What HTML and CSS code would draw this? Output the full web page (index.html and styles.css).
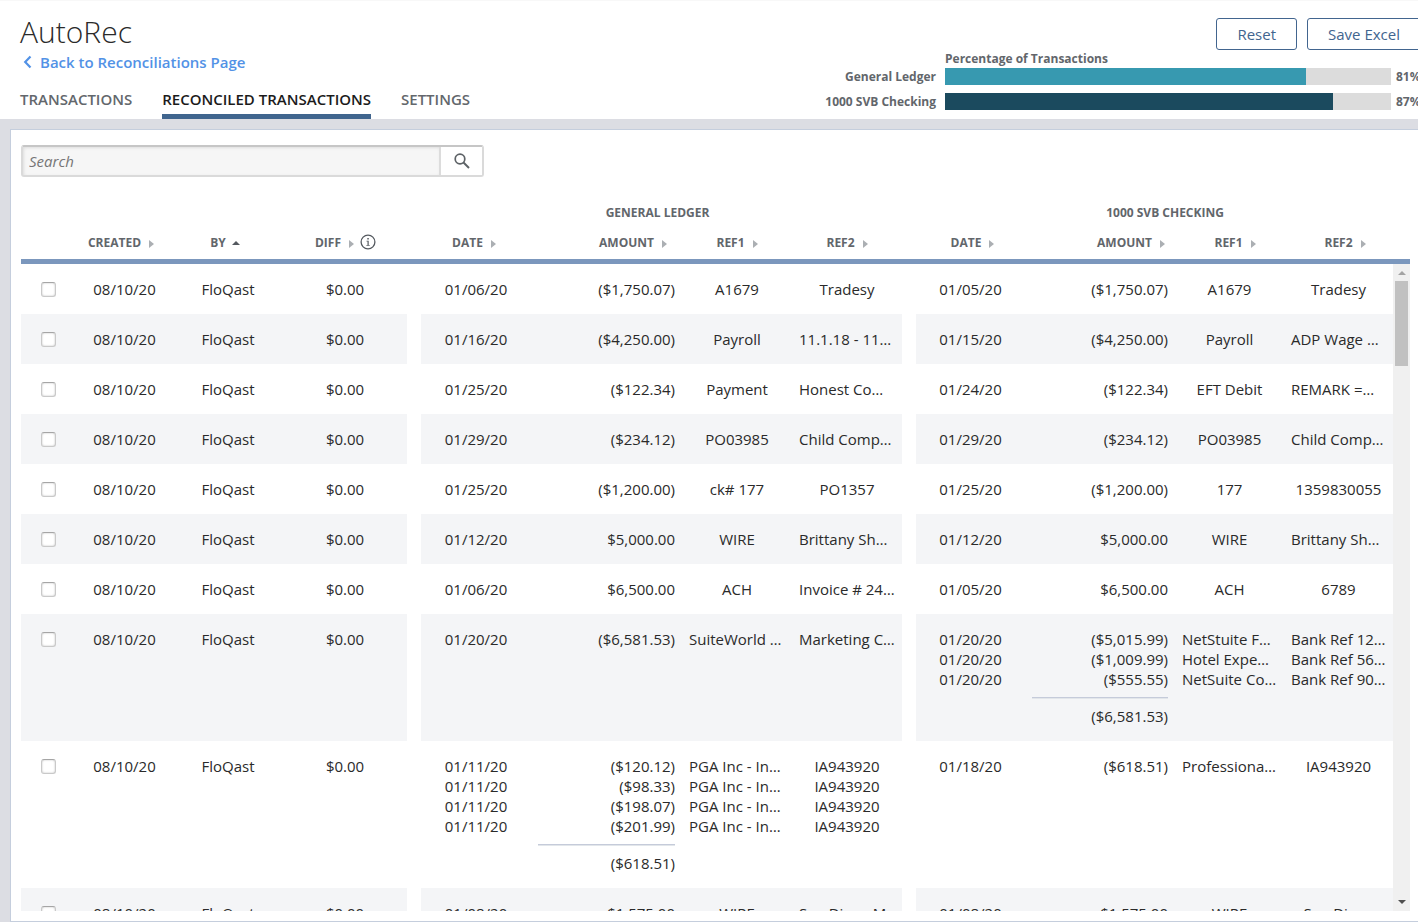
FILE: index.html
```html
<!DOCTYPE html>
<html lang="en">
<head>
<meta charset="utf-8">
<title>AutoRec</title>
<link rel="stylesheet" href="styles.css">
</head>
<body>
<div class="page">
  <header class="header">
    <div class="heading">
      <h1 class="title">AutoRec</h1>
      <a class="back" href="#"><svg class="back-icon" width="10" height="14" viewBox="0 0 10 14" fill="none" stroke="currentColor" stroke-width="2.2"><path d="M7.5 1.5L2.2 7L7.5 12.5"/></svg>Back to Reconciliations Page</a>
      <nav class="tabs">
        <a class="tab" href="#">TRANSACTIONS</a>
        <a class="tab active" href="#">RECONCILED TRANSACTIONS</a>
        <a class="tab" href="#">SETTINGS</a>
      </nav>
    </div>
    <div class="summary">
      <div class="actions">
        <button class="button" type="button">Reset</button>
        <button class="button" type="button">Save Excel</button>
      </div>
      <div class="chart">
        <span class="chart-title">Percentage of Transactions</span>
        <span class="chart-label">General Ledger</span>
        <div class="bar"><div class="fill ledger" style="width:81%"></div></div>
        <span class="percent">81%</span>
        <span class="chart-label">1000 SVB Checking</span>
        <div class="bar"><div class="fill checking" style="width:87%"></div></div>
        <span class="percent">87%</span>
      </div>
    </div>
  </header>
  <main class="main">
    <section class="card">
      <form class="search">
        <input class="search-input" type="text" placeholder="Search" aria-label="Search">
        <button class="search-button" type="button" aria-label="Search"><svg width="16" height="16" viewBox="0 0 16 16" fill="none" stroke="#5d6266" stroke-width="2"><circle cx="6" cy="6" r="4.8" stroke-width="1.7"/><path d="M9.5 9.5L15 15"/></svg></button>
      </form>
      <table class="table head">
        <colgroup><col class="h-check"><col class="h-created"><col class="h-by"><col class="h-diff"><col class="h-date"><col class="h-amount"><col class="h-ref"><col class="h-ref"><col class="h-date2"><col class="h-amount2"><col class="h-ref"><col class="h-ref"><col class="h-end"></colgroup>
        <thead>
          <tr class="groups"><th colspan="4"></th><th class="ledger-title" colspan="4">GENERAL LEDGER</th><th class="checking-title" colspan="5">1000 SVB CHECKING</th></tr>
          <tr class="labels">
            <th></th>
            <th>CREATED<i class="sort"></i></th>
            <th>BY<i class="sort up"></i></th>
            <th>DIFF<i class="sort"></i><svg class="info" width="16" height="16" viewBox="0 0 16 16"><circle cx="8" cy="8" r="6.9" fill="none" stroke="#54595f" stroke-width="1.3"/><path d="M7.3 4h1.5v1.5H7.3zM6.5 6.7h2.2v4.2h1v.9H6.4v-.9h1.1V7.6h-1z" fill="#54595f"/></svg></th>
            <th class="start">DATE<i class="sort"></i></th>
            <th class="amount">AMOUNT<i class="sort"></i></th>
            <th>REF1<i class="sort"></i></th>
            <th>REF2<i class="sort"></i></th>
            <th class="start">DATE<i class="sort"></i></th>
            <th class="amount">AMOUNT<i class="sort"></i></th>
            <th>REF1<i class="sort"></i></th>
            <th>REF2<i class="sort"></i></th>
            <th></th>
          </tr>
        </thead>
      </table>
      <div class="scroll">
        <div class="viewport">
          <table class="table body">
            <colgroup><col class="b-check"><col class="b-created"><col class="b-by"><col class="b-diff"><col class="b-date"><col class="b-amount"><col class="b-ref"><col class="b-ref"><col class="b-date2"><col class="b-amount2"><col class="b-ref2"><col class="b-ref2"></colgroup>
            <tbody>
              <tr><td><input class="check" type="checkbox" aria-label="Select row 1"></td><td>08/10/20</td><td>FloQast</td><td>$0.00</td><td class="start">01/06/20</td><td class="amount">($1,750.07)</td><td>A1679</td><td>Tradesy</td><td class="start">01/05/20</td><td class="amount">($1,750.07)</td><td>A1679</td><td>Tradesy</td></tr>
              <tr><td><input class="check" type="checkbox" aria-label="Select row 2"></td><td>08/10/20</td><td>FloQast</td><td>$0.00</td><td class="start">01/16/20</td><td class="amount">($4,250.00)</td><td>Payroll</td><td class="cut">11.1.18 - 11…</td><td class="start">01/15/20</td><td class="amount">($4,250.00)</td><td>Payroll</td><td class="cut">ADP Wage …</td></tr>
              <tr><td><input class="check" type="checkbox" aria-label="Select row 3"></td><td>08/10/20</td><td>FloQast</td><td>$0.00</td><td class="start">01/25/20</td><td class="amount">($122.34)</td><td>Payment</td><td class="cut">Honest Co…</td><td class="start">01/24/20</td><td class="amount">($122.34)</td><td>EFT Debit</td><td class="cut">REMARK =…</td></tr>
              <tr><td><input class="check" type="checkbox" aria-label="Select row 4"></td><td>08/10/20</td><td>FloQast</td><td>$0.00</td><td class="start">01/29/20</td><td class="amount">($234.12)</td><td>PO03985</td><td class="cut">Child Comp…</td><td class="start">01/29/20</td><td class="amount">($234.12)</td><td>PO03985</td><td class="cut">Child Comp…</td></tr>
              <tr><td><input class="check" type="checkbox" aria-label="Select row 5"></td><td>08/10/20</td><td>FloQast</td><td>$0.00</td><td class="start">01/25/20</td><td class="amount">($1,200.00)</td><td>ck# 177</td><td>PO1357</td><td class="start">01/25/20</td><td class="amount">($1,200.00)</td><td>177</td><td>1359830055</td></tr>
              <tr><td><input class="check" type="checkbox" aria-label="Select row 6"></td><td>08/10/20</td><td>FloQast</td><td>$0.00</td><td class="start">01/12/20</td><td class="amount">$5,000.00</td><td>WIRE</td><td class="cut">Brittany Sh…</td><td class="start">01/12/20</td><td class="amount">$5,000.00</td><td>WIRE</td><td class="cut">Brittany Sh…</td></tr>
              <tr><td><input class="check" type="checkbox" aria-label="Select row 7"></td><td>08/10/20</td><td>FloQast</td><td>$0.00</td><td class="start">01/06/20</td><td class="amount">$6,500.00</td><td>ACH</td><td class="cut">Invoice # 24…</td><td class="start">01/05/20</td><td class="amount">$6,500.00</td><td>ACH</td><td>6789</td></tr>
              <tr><td><input class="check" type="checkbox" aria-label="Select row 8"></td><td>08/10/20</td><td>FloQast</td><td>$0.00</td><td class="start">01/20/20</td><td class="amount">($6,581.53)</td><td class="cut">SuiteWorld …</td><td class="cut">Marketing C…</td><td class="start">01/20/20<br>01/20/20<br>01/20/20</td><td class="amount">($5,015.99)<br>($1,009.99)<br>($555.55)<hr class="rule">($6,581.53)</td><td class="cut">NetStuite F…<br>Hotel Expe…<br>NetSuite Co…</td><td class="cut">Bank Ref 12…<br>Bank Ref 56…<br>Bank Ref 90…</td></tr>
              <tr><td><input class="check" type="checkbox" aria-label="Select row 9"></td><td>08/10/20</td><td>FloQast</td><td>$0.00</td><td class="start">01/11/20<br>01/11/20<br>01/11/20<br>01/11/20</td><td class="amount">($120.12)<br>($98.33)<br>($198.07)<br>($201.99)<hr class="rule">($618.51)</td><td class="cut">PGA Inc - In…<br>PGA Inc - In…<br>PGA Inc - In…<br>PGA Inc - In…</td><td>IA943920<br>IA943920<br>IA943920<br>IA943920</td><td class="start">01/18/20</td><td class="amount">($618.51)</td><td class="cut">Professiona…</td><td>IA943920</td></tr>
              <tr><td><input class="check" type="checkbox" aria-label="Select row 10"></td><td>08/10/20</td><td>FloQast</td><td>$0.00</td><td class="start">01/08/20</td><td class="amount">$1,575.00</td><td>WIRE</td><td class="cut">San Diego M…</td><td class="start">01/08/20</td><td class="amount">$1,575.00</td><td>WIRE</td><td>San Diego</td></tr>
            </tbody>
          </table>
        </div>
        <div class="scrollbar"><i class="arrow arrow-up"></i><div class="track"><div class="thumb"></div></div><i class="arrow arrow-down"></i></div>
      </div>
    </section>
  </main>
</div>
</body>
</html>
```
FILE: styles.css
```css
* { box-sizing: border-box; }
html { overflow: hidden; }
body {
  margin: 0;
  overflow: hidden;
  background: #dcdde3;
  color: #2a2a2a;
  font-family: "Open Sans", "Noto Sans", sans-serif;
  font-size: 15px;
  line-height: 20px;
}
/* the content runs slightly past the right edge of the window */
.page {
  display: flex;
  flex-direction: column;
  height: 100vh;
  margin-right: -13px;
}
.header {
  display: flex;
  justify-content: space-between;
  padding: 0 10px 0 20px;
  background: #fff;
  border-top: 1px solid #f8f8f8;
}
.heading {
  display: flex;
  flex-direction: column;
  align-items: flex-start;
  padding-top: 11px;
}
.title {
  margin: 0;
  font-size: 30px;
  font-weight: 300;
  line-height: 40px;
}
.back {
  display: flex;
  align-items: center;
  gap: 7px;
  padding-left: 3px;
  color: #5292e6;
  font-weight: 600;
  text-decoration: none;
}
.tabs {
  display: flex;
  gap: 30px;
  margin-top: 14px;
}
.tab {
  padding: 3px 0 5px;
  border-bottom: 5px solid transparent;
  color: #63676c;
  font-weight: 600;
  text-decoration: none;
}
.tab.active {
  border-color: #40658e;
  color: #1b1b1b;
}
.summary {
  padding-top: 17px;
}
.actions {
  display: flex;
  justify-content: flex-end;
  gap: 10px;
}
.button {
  height: 32px;
  padding: 0 20px;
  border: 1px solid #42658f;
  border-radius: 3px;
  background: #fff;
  color: #42658f;
  font: inherit;
}
.chart {
  display: grid;
  grid-template-columns: auto 446px 30px;
  row-gap: 8px;
  color: #62666b;
  font-size: 12px;
  font-weight: 700;
  line-height: 17px;
}
.chart-title {
  grid-column: 2 / 4;
  margin-bottom: -7px;
}
.chart-label {
  padding-right: 9px;
  text-align: right;
}
.bar { background: #dcdcdc; }
.fill { height: 17px; }
.ledger { background: #3799b0; }
.checking { background: #1b4a5e; }
.percent {
  padding-left: 5px;
  white-space: nowrap;
}
.main {
  display: flex;
  flex: 1;
  min-height: 0;
  padding: 10px 10px 0;
}
.card {
  display: flex;
  flex: 1;
  flex-direction: column;
  min-width: 0;
  padding: 15px 10px 10px;
  border: 1px solid #c5cedd;
  background: #fff;
}
.search {
  display: flex;
  width: 463px;
  height: 32px;
  border: 2px solid #dadada;
  border-top-color: #c6c6c6;
  border-radius: 3px;
}
.search-input {
  flex: 1;
  min-width: 0;
  padding: 0 6px;
  border: 0;
  background: #f6f6f6;
  box-shadow: inset 1px 1px 3px #ddd;
  font: inherit;
}
.search-input::placeholder {
  color: #757575;
  font-style: italic;
}
.search-button {
  display: flex;
  align-items: center;
  justify-content: center;
  width: 43px;
  padding: 0;
  border: 0;
  border-left: 2px solid #dcdcdc;
  background: #fff;
}
.table {
  width: 100%;
  table-layout: fixed;
  border-collapse: separate;
  border-spacing: 0;
}
.head {
  margin-top: 20px;
  border-bottom: 5px solid #7b97bd;
}
.head th {
  padding: 0;
  color: #62666b;
  font-size: 12px;
  font-weight: 700;
  white-space: nowrap;
}
.groups th { height: 32px; }
.labels th { height: 30px; padding-bottom: 2px; }
.head .ledger-title { padding-left: 6px; }
.head .checking-title { padding-left: 18px; }
.head .start { border-left: 14px solid #fff; }
.head .amount {
  padding-right: 15px;
  text-align: right;
}
.h-check { width: 55px; }
.h-created { width: 90px; }
.h-by { width: 118px; }
.h-diff { width: 123px; }
.h-date { width: 120px; }
.h-amount { width: 155px; }
.h-ref { width: 110px; }
.h-date2 { width: 127px; }
.h-amount2 { width: 151px; }
.h-end { width: 10px; }
.sort {
  display: inline-block;
  margin-left: 8px;
  border: solid transparent;
  border-width: 4px 0 4px 5px;
  border-left-color: #abafb3;
  vertical-align: -1px;
}
.sort.up {
  margin-left: 6px;
  border-color: transparent transparent #54595f;
  border-width: 0 4px 4px;
  vertical-align: 2px;
}
.info {
  margin-left: 6px;
  vertical-align: -3px;
}
.scroll {
  display: flex;
  flex: 1;
  min-height: 0;
}
.viewport {
  flex: 1;
  min-width: 0;
  overflow: hidden;
}
.b-check { width: 55px; }
.b-created { width: 97px; }
.b-by { width: 110px; }
.b-diff { width: 124px; }
.b-date { width: 124px; }
.b-amount { width: 151px; }
.b-ref { width: 110px; }
.b-date2 { width: 123px; }
.b-amount2 { width: 150px; }
.b-ref2 { width: 109px; }
.body td {
  padding: 15px 7px;
  text-align: center;
  vertical-align: top;
  white-space: nowrap;
}
.body tr:nth-child(even) td { background: #f4f5f7; }
.body .start { border-left: 14px solid #fff; }
.body .amount { text-align: right; }
.body .cut { text-align: left; }
.rule {
  height: 2px;
  margin: 8px 0 7px;
  border: 0;
  border-top: 1px solid #c5cbda;
  border-bottom: 1px solid #e2e6ea;
}
.check {
  appearance: none;
  display: block;
  width: 15px;
  height: 15px;
  margin: 3px auto 0;
  border: 1px solid #c9c9c9;
  border-top-color: #a5a5a5;
  border-radius: 3px;
  background: #fff;
  box-shadow: inset 0 0 2px #bbb;
}
.scrollbar {
  display: flex;
  flex-direction: column;
  align-items: center;
  width: 17px;
  padding: 7px 0;
  background: #f0f0f0;
}
.arrow {
  border: 4px solid transparent;
}
.arrow-up {
  border-top: 0;
  border-bottom-color: #a3a3a3;
}
.arrow-down {
  border-bottom: 0;
  border-top-color: #505050;
}
.track {
  flex: 1;
  width: 13px;
  padding-top: 6px;
}
.thumb {
  height: 85px;
  background: #c1c1c1;
}
```
